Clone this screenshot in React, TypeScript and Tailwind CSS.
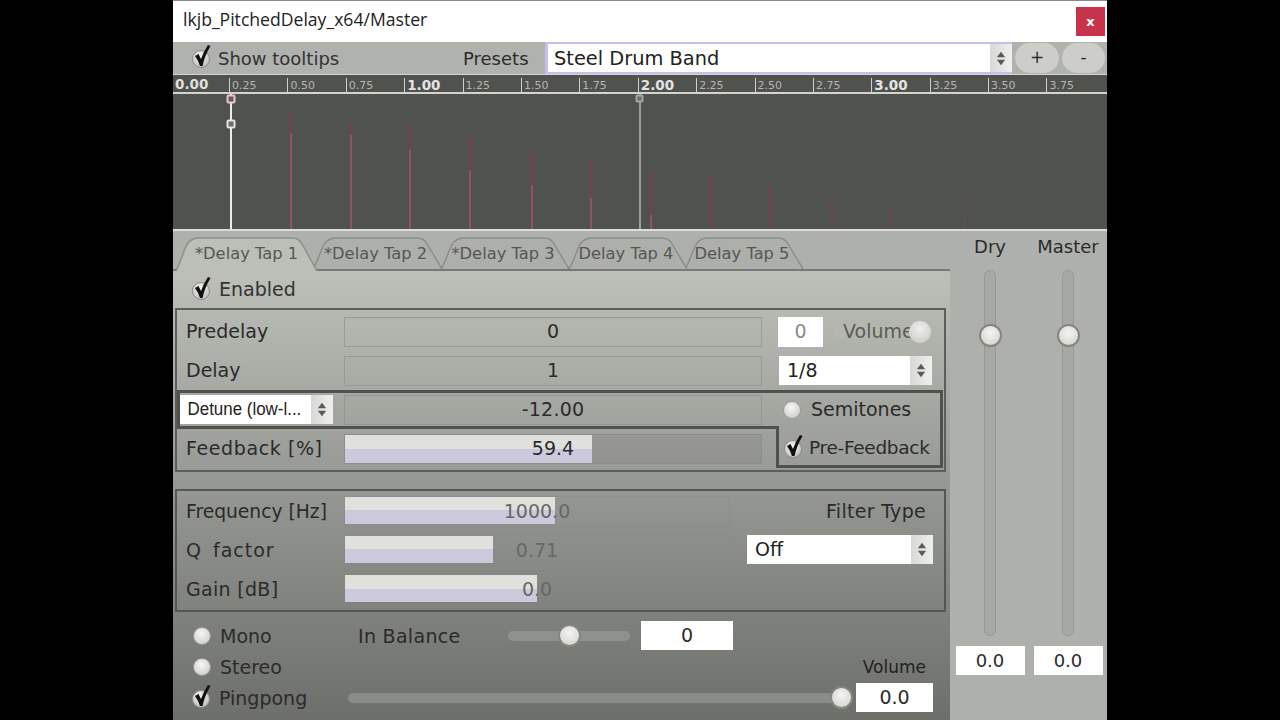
import React from 'react';

/* ───────── small drawn widgets ───────── */

const Check = () => (
  <svg width="24" height="28" viewBox="0 0 24 28" className="shrink-0">
    <defs>
      <radialGradient id="ball" cx="45%" cy="35%" r="70%">
        <stop offset="0%" stopColor="#f4f4f2" />
        <stop offset="100%" stopColor="#bdbdb8" />
      </radialGradient>
    </defs>
    <circle cx="11" cy="15" r="8.5" fill="url(#ball)" stroke="#8b8d89" />
    <path d="M5 12 L8.5 10 L11 15 Q14 7 18 1 L20.5 2 Q15 11 12.5 22 L10 22 Q8 16 5 12 Z" fill="#101010" />
  </svg>
);

const Radio = () => (
  <span className="block h-[18px] w-[18px] shrink-0 rounded-full border border-[#9a9c98] bg-[radial-gradient(circle_at_45%_35%,#f6f6f4,#c6c6c2)]" />
);

const Knob = ({ size = 'big' }: { size?: 'big' | 'small' }) => (
  <span
    className={
      size === 'big'
        ? 'block h-[23px] w-[23px] shrink-0 rounded-full border-2 border-[#85877f] bg-[radial-gradient(circle_at_50%_35%,#f4f4f2,#cfcfca)]'
        : 'block h-[22px] w-[22px] shrink-0 rounded-full bg-[radial-gradient(circle_at_50%_35%,#f0f0ee,#c4c4c0)]'
    }
  />
);

const Spin = () => (
  <svg width="10" height="15" viewBox="0 0 12 18">
    <path d="M6 1 L11 7.5 H1 Z M6 17 L1 10.5 H11 Z" fill="#5a5a58" />
  </svg>
);

const Combo = ({ text, cls, textCls }: { text: string; cls: string; textCls: string }) => (
  <div className={`flex shrink-0 items-stretch bg-white ${cls}`}>
    <span className={`flex-1 whitespace-nowrap text-[#222] ${textCls}`}>{text}</span>
    <span className="flex w-[22px] items-center justify-center bg-linear-to-r from-[#d8d8d6] to-[#efefed]">
      <Spin />
    </span>
  </div>
);

const Slider = ({ value, fill, cls, textCls = 'text-[#2b2b2b]' }: { value: string; fill?: string; cls: string; textCls?: string }) => (
  <div className={`relative flex shrink-0 items-center justify-center ${cls}`}>
    {fill && (
      <span className={`absolute top-0 bottom-0 left-0 bg-linear-to-b from-[#e0e0dc] from-50% to-[#cdc9dd] to-50% ${fill}`} />
    )}
    <span className={`relative ${textCls}`}>{value}</span>
  </div>
);

const NumBox = ({ text, cls, textCls = 'text-[#2b2b2b]' }: { text: string; cls: string; textCls?: string }) => (
  <div className={`flex shrink-0 items-center justify-center bg-white ${cls} ${textCls}`}>{text}</div>
);

/* ───────── ruler + envelope ───────── */

const TICKS = [
  ['0.25', false], ['0.50', false], ['0.75', false], ['1.00', true],
  ['1.25', false], ['1.50', false], ['1.75', false], ['2.00', true],
  ['2.25', false], ['2.50', false], ['2.75', false], ['3.00', true],
  ['3.25', false], ['3.50', false], ['3.75', false],
] as const;

const Ruler = () => (
  <div className="flex h-[20px] border-t border-b-2 border-[#d4d4d0] bg-[#50524e]">
    <span className="w-[56px] pl-[2px] text-[13.5px] leading-[19px] font-bold text-[#dedede]">0.00</span>
    {TICKS.map(([t, major]) => (
      <span
        key={t}
        className={
          major
            ? 'mt-[3px] w-[58.4px] border-l border-[#cfcfcb] pl-[2px] text-[13.5px] leading-[14px] font-bold text-[#e4e4e4]'
            : 'mt-[3px] w-[58.4px] border-l border-[#cfcfcb] pl-[2px] text-[11px] leading-[15px] text-[#b4b6b2]'
        }
      >
        {t}
      </span>
    ))}
  </div>
);

const PEAKS = [
  [118, 112, 133, 1], [178, 122, 135, 1], [237, 124, 150, 1], [297, 137, 170, 1], [359, 150, 185, 1],
  [418, 160, 198, 1], [478, 172, 215, 1], [537, 175, 229, 0.9], [597, 185, 229, 0.8], [659, 200, 229, 0.7],
  [718, 208, 229, 0.6], [792, 198, 212, 0.2],
];

const Graph = () => (
  <svg width="934" height="135" viewBox="0 94 934 135" className="block bg-[#50524e]">
    {PEAKS.map(([x, top, mid, o]) => (
      <g key={x} opacity={o}>
        <line x1={x} x2={x} y1={top} y2="229" stroke="#74404f" strokeWidth="2.5" />
        {mid < 229 && <line x1={x} x2={x} y1={mid} y2="229" stroke="#9a5a6c" strokeWidth="1.5" />}
      </g>
    ))}
    <line x1="58" x2="58" y1="94" y2="229" stroke="#ececea" strokeWidth="2" />
    <line x1="467" x2="467" y1="94" y2="229" stroke="#b4b6b2" strokeWidth="1.5" />
    <rect x="54.5" y="95.5" width="7" height="7" rx="1" fill="#6a5a5e" stroke="#e8c8d0" strokeWidth="2" />
    <rect x="54.5" y="120.5" width="7" height="7" rx="1" fill="#6a6c68" stroke="#e4e4e2" strokeWidth="2" />
    <rect x="463.5" y="95.5" width="6" height="6" rx="1" fill="#6a6c68" stroke="#a4a6a2" strokeWidth="2" />
  </svg>
);

/* ───────── tabs ───────── */

const Tab = ({ label, w, active, cls }: { label: string; w: number; active?: boolean; cls: string }) => (
  <div className={`relative flex items-center justify-center ${active ? 'h-[35px]' : 'h-[33px]'} ${cls}`}>
    <svg width={w} height={active ? 35 : 33} className="absolute inset-0">
      <path
        d={`M1 ${active ? 35 : 33} C6 26 9 12 13 7 Q17 2 24 2 H${w - 28} Q${w - 21} 2 ${w - 18} 8 L${w - 3} ${active ? 35 : 33}`}
        fill={active ? '#bcbeb8' : '#adafab'}
        stroke="#8c8e8a"
        strokeWidth="1.5"
      />
    </svg>
    <span className={`relative text-[16.3px] text-[#555754] ${active ? 'pr-[2px] pt-[1px]' : 'pr-[6px] pt-[3px]'}`}>{label}</span>
  </div>
);

/* ───────── app ───────── */

export default function App() {
  return (
    <div className="h-[720px] w-[1280px] overflow-hidden bg-black pl-[173px] font-['DejaVu_Sans',sans-serif]">
      <div className="flex h-[720px] w-[934px] flex-col">
        {/* title bar */}
        <div className="flex h-[42px] shrink-0 items-center justify-between border-t border-[#8a8a8a] bg-white pl-[10px] pr-[2px]">
          <span className="pb-[4px] font-['Open_Sans',sans-serif] text-[17.6px] text-[#222]">lkjb_PitchedDelay_x64/Master</span>
          <span className="flex h-[29px] w-[29px] items-center justify-center bg-[#c8334c] text-[13px] font-bold text-white">x</span>
        </div>

        {/* toolbar */}
        <div className="flex h-[32px] shrink-0 items-center bg-[#b0b2ae] pl-[17px] text-[18px] text-[#2b2b2b]">
          <Check />
          <span className="ml-[4px] w-[245px] text-[#333]">Show tooltips</span>
          <span className="w-[82px]">Presets</span>
          <Combo
            text="Steel Drum Band"
            cls="h-[32px] w-[467px] border-y-2 border-l-[3px] border-[#c6beee]"
            textCls="pl-[6px] text-[19.4px] leading-[29px]"
          />
          <span className="ml-[3px] flex h-[30px] w-[44px] items-center justify-center rounded-full bg-[#cdcec9] text-[17px]">+</span>
          <span className="ml-[3px] flex h-[30px] w-[43px] items-center justify-center rounded-full bg-[#cdcec9] text-[17px]">-</span>
        </div>

        <Ruler />
        <Graph />

        {/* body */}
        <div className="flex flex-1 border-t-2 border-[#dcdcd8] bg-[#aeb0ac]">
          {/* left: tabs + panel */}
          <div className="flex w-[777px] shrink-0 flex-col">
            <div className="flex h-[38px] items-start pt-[5px] pl-[2px]">
              <Tab label="*Delay Tap 1" w={145} active cls="z-10 w-[145px]" />
              <Tab label="*Delay Tap 2" w={133} cls="z-[9] ml-[-8px] w-[133px]" />
              <Tab label="*Delay Tap 3" w={132} cls="z-[8] ml-[-5px] w-[132px]" />
              <Tab label="Delay Tap 4" w={122} cls="z-[7] ml-[-4px] w-[122px]" />
              <Tab label="Delay Tap 5" w={122} cls="z-[6] ml-[-6px] w-[122px]" />
            </div>

            <div className="flex flex-1 flex-col border-t-2 border-[#777975] bg-linear-to-b from-[#bdbfb9] to-[#6d6f6b] pl-[2px] pr-[4px] text-[19px] text-[#2b2b2b]">
              {/* enabled */}
              <div className="flex h-[37px] items-center pl-[15px]">
                <Check />
                <span className="ml-[5px] text-[#333]">Enabled</span>
              </div>

              {/* main group */}
              <div className="grid h-[164px] grid-cols-[599px_1fr] grid-rows-[39px_39px_39px_39px] border-2 border-[#5c5e5a] pt-[2px]">
                <div className="flex items-center">
                  <span className="w-[167px] pl-[9px]">Predelay</span>
                  <Slider value="0" cls="h-[30px] w-[418px] border border-[#999b97]" />
                </div>
                <div className="flex items-center pl-[2px]">
                  <NumBox text="0" cls="h-[30px] w-[45px]" textCls="text-[#8a8a88]" />
                  <div className="relative ml-[10px] flex h-[22px] w-[97px] items-center">
                    <span className="absolute left-0 right-[10px] h-[12px] rounded-full bg-[#b4b6b0]" />
                    <span className="relative ml-[10px] text-[#5a5c58]">Volume</span>
                    <span className="absolute right-[-1px]">
                      <Knob size="small" />
                    </span>
                  </div>
                </div>

                <div className="flex items-center">
                  <span className="w-[167px] pl-[9px]">Delay</span>
                  <Slider value="1" cls="h-[30px] w-[418px] border border-[#989a96]" />
                </div>
                <div className="flex items-center pl-[3px]">
                  <Combo text="1/8" cls="h-[29px] w-[153px]" textCls="pl-[8px] leading-[29px]" />
                </div>

                <div className="flex items-center border-y-[3px] border-l-[3px] border-[#4f514d]">
                  <Combo
                    text="Detune (low-l..."
                    cls="h-[29px] w-[153px]"
                    textCls="pl-[8px] font-['Liberation_Sans',sans-serif] text-[18px] leading-[29px] scale-x-[0.94] origin-left"
                  />
                  <Slider value="-12.00" cls="ml-[11px] h-[30px] w-[418px] border border-[#949692]" textCls="tracking-[0.2px] text-[#2b2b2b]" />
                </div>
                <div className="row-span-2 mr-px flex flex-col border-y-[3px] border-r-[3px] border-[#4f514d]">
                  <div className="flex h-[33px] items-center pl-[7px]">
                    <Radio />
                    <span className="ml-[10px]">Semitones</span>
                  </div>
                  <div className="flex flex-1 items-center border-l-[3px] border-[#4f514d] pl-[3px] pt-[4px]">
                    <Check />
                    <span className="ml-[3px] text-[18.5px] tracking-[-0.3px]">Pre-Feedback</span>
                  </div>
                </div>

                <div className="flex items-center">
                  <span className="w-[167px] pl-[9px] tracking-[0.6px]">Feedback [%]</span>
                  <Slider value="59.4" fill="w-[247px]" cls="h-[30px] w-[418px] border border-[#8c8e8a] bg-black/5" />
                </div>
              </div>

              {/* filter group */}
              <div className="mt-[17px] grid h-[123px] grid-cols-[553px_214px] grid-rows-[39px_39px_39px] border-2 border-[#555753] text-[#2b2b2b]">
                <div className="flex items-center">
                  <span className="w-[167px] pl-[9px] pt-[4px] text-[18.7px]">Frequency [Hz]</span>
                  <Slider value="1000.0" fill="w-[210px]" cls="h-[29px] w-[386px] border border-[#868884]/40" textCls="pt-[2px] text-[#666864]" />
                </div>
                <div className="flex items-center justify-end pr-[18px] pt-[2px] tracking-[0.3px]">Filter Type</div>

                <div className="flex items-center">
                  <span className="w-[167px] pl-[9px] pt-[2px] tracking-[1px] [word-spacing:4px]">Q factor</span>
                  <Slider value="0.71" fill="w-[148px]" cls="h-[29px] w-[386px] border border-[#868884]/40" textCls="pt-[2px] text-[#666864]" />
                </div>
                <div className="flex items-center justify-end pr-[11px]">
                  <Combo text="Off" cls="h-[29px] w-[186px]" textCls="pl-[8px] leading-[29px]" />
                </div>

                <div className="flex items-center">
                  <span className="w-[167px] pl-[9px] pt-[2px] tracking-[0.3px]">Gain [dB]</span>
                  <Slider value="0.0" fill="w-[192px]" cls="h-[29px] w-[386px] border border-transparent" textCls="pt-[2px] text-[#666864]" />
                </div>
              </div>

              {/* mode + balance */}
              <div className="mt-[8px] flex h-[31px] items-center pl-[18px]">
                <Radio />
                <span className="ml-[9px] w-[138px] pt-[2px]">Mono</span>
                <span className="w-[150px] pt-[2px] tracking-[0.3px]">In Balance</span>
                <div className="relative flex h-[24px] w-[122px] items-center">
                  <span className="h-[10px] w-full rounded-full bg-[#8f918d]" />
                  <span className="absolute left-[50px]">
                    <Knob />
                  </span>
                </div>
                <NumBox text="0" cls="ml-[11px] h-[29px] w-[92px]" />
              </div>
              <div className="flex h-[31px] items-center pl-[18px]">
                <Radio />
                <span className="ml-[9px] flex-1 pt-[2px]">Stereo</span>
                <span className="pr-[20px] pt-[2px] text-[17px] text-[#222]">Volume</span>
              </div>
              <div className="flex h-[31px] items-center pl-[15px]">
                <Check />
                <span className="ml-[5px] w-[129px] pt-[2px]">Pingpong</span>
                <div className="relative flex h-[24px] w-[502px] items-center">
                  <span className="h-[10px] w-full rounded-full bg-[#8a8c88]" />
                  <span className="absolute right-[-3px]">
                    <Knob />
                  </span>
                </div>
                <NumBox text="0.0" cls="ml-[6px] h-[29px] w-[77px]" />
              </div>
            </div>
          </div>

          {/* right: dry + master */}
          <div className="flex flex-1 justify-between pl-[5px] pr-[4px] pt-[5px] text-[18px] text-[#2b2b2b]">
            {['Dry', 'Master'].map((name) => (
              <div key={name} className="flex w-[70px] flex-col items-center">
                <span className="h-[34px] whitespace-nowrap leading-[22px]">{name}</span>
                <div className="relative flex h-[366px] w-[12px] justify-center rounded-full border border-[#979995] bg-[#a6a8a4]">
                  <span className="absolute top-[53px]">
                    <Knob />
                  </span>
                </div>
                <NumBox text="0.0" cls="mt-[10px] h-[29px] w-[69px]" />
              </div>
            ))}
          </div>
        </div>
      </div>
    </div>
  );
}
